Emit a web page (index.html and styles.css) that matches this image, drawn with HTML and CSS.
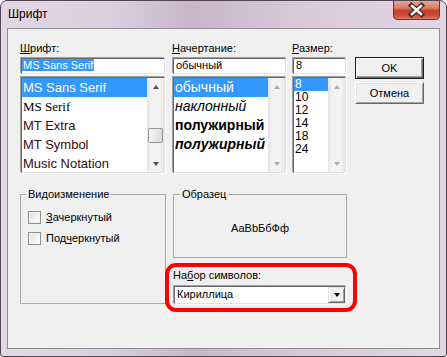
FILE: index.html
```html
<!DOCTYPE html>
<html lang="ru">
<head>
  <meta charset="UTF-8">
  <title>Шрифт</title>
  <link rel="stylesheet" href="styles.css">
</head>
<body>
<div class="window">
  <div class="titlebar">
    <span class="title">Шрифт</span>
    <div class="close">
      <svg width="45" height="18" viewBox="0 0 45 18">
        <path d="M17.5 4.5 L27.5 13.5 M27.5 4.5 L17.5 13.5" stroke="#3b2b2b" stroke-width="5" stroke-linecap="square"/>
        <path d="M18 5 L27 13 M27 5 L18 13" stroke="#fff" stroke-width="2.6" stroke-linecap="square"/>
      </svg>
    </div>
  </div>

  <div class="client">
    <div class="top-row">
      <div class="col col-font">
        <div class="label"><u>Ш</u>рифт:</div>
        <div class="field sunken"><span class="sel">MS Sans Serif</span></div>
        <div class="listbox sunken">
          <ul class="items font-items">
            <li class="selected">MS Sans Serif</li>
            <li class="serif">MS Serif</li>
            <li class="tt">MT Extra</li>
            <li class="tt">MT Symbol</li>
            <li class="tt">Music Notation</li>
          </ul>
          <div class="scrollbar">
            <div class="sb-btn"><span class="arrow up"></span></div>
            <div class="sb-track"><div class="thumb"></div></div>
            <div class="sb-btn"><span class="arrow down"></span></div>
          </div>
        </div>
      </div>

      <div class="col col-style">
        <div class="label"><u>Н</u>ачертание:</div>
        <div class="field sunken">обычный</div>
        <div class="listbox sunken">
          <ul class="items style-items">
            <li class="selected">обычный</li>
            <li class="italic">наклонный</li>
            <li class="bold">полужирный</li>
            <li class="bold italic">полужирный</li>
          </ul>
          <div class="scrollbar">
            <div class="sb-btn"><span class="arrow up off"></span></div>
            <div class="sb-track"></div>
            <div class="sb-btn"><span class="arrow down off"></span></div>
          </div>
        </div>
      </div>

      <div class="col col-size">
        <div class="label"><u>Р</u>азмер:</div>
        <div class="field sunken">8</div>
        <div class="listbox sunken">
          <ul class="items size-items">
            <li class="selected">8</li>
            <li>10</li>
            <li>12</li>
            <li>14</li>
            <li>18</li>
            <li>24</li>
          </ul>
          <div class="scrollbar">
            <div class="sb-btn"><span class="arrow up off"></span></div>
            <div class="sb-track"></div>
            <div class="sb-btn"><span class="arrow down off"></span></div>
          </div>
        </div>
      </div>

      <div class="buttons">
        <div class="btn default">OK</div>
        <div class="btn">Отмена</div>
      </div>
    </div>

    <div class="bottom-row">
      <fieldset class="group effects">
        <legend>Видоизменение</legend>
        <div class="check"><span class="box"></span><u>З</u>ачеркнутый</div>
        <div class="check"><span class="box"></span>Под<u>ч</u>еркнутый</div>
      </fieldset>

      <div class="col-right">
        <fieldset class="group sample">
          <legend>Образец</legend>
          <div class="sample-text">АаBbБбФф</div>
        </fieldset>
        <div class="label charset-label">На<u>б</u>ор символов:</div>
        <div class="combo sunken">
          <span>Кириллица</span>
          <span class="drop"><span class="arrow down dark"></span></span>
        </div>
      </div>
    </div>
  </div>

  <div class="ring"></div>
</div>
</body>
</html>
```

FILE: styles.css
```css
body {
  margin: 0;
  font-family: "Liberation Sans", Arial, sans-serif;
  font-size: 11px;
  color: #000;
}
.window {
  position: relative;
  width: 447px;
  height: 357px;
  box-sizing: border-box;
  border: 1px solid #4f4553;
  border-radius: 7px 7px 3px 3px;
  padding: 0 6px 7px;
  display: flex;
  flex-direction: column;
  overflow: hidden;
  background: linear-gradient(90deg, #e3d7e5 0%, #dccee0 25%, #c8b5ca 43%, #d2c0d4 56%, #dccbdd 72%, #e2d6e5 100%);
}
.titlebar {
  height: 27px;
  display: flex;
  justify-content: space-between;
  align-items: flex-start;
}
.title {
  font-size: 12px;
  line-height: 14px;
  padding: 6px 0 0 1px;
}
.close {
  width: 45px;
  height: 18px;
  margin-top: -1px;
  border: 1px solid #6d3634;
  border-radius: 0 0 4px 4px;
  background: linear-gradient(#e8a796 0%, #d97a66 40%, #c4402c 52%, #c94c36 80%, #de7a5c 100%);
}
.close svg {
  display: block;
}
.client {
  flex: 1;
  background: #f0f0f0;
  border: 1px solid #8d8d8d;
  padding: 13px 0 0 12px;
}

/* sunken 3D edge */
.sunken {
  border: 1px solid;
  border-color: #696969 #e3e3e3 #e3e3e3 #696969;
  box-shadow: -1px -1px 0 #a0a0a0, 1px 1px 0 #fff;
  background: #fff;
  box-sizing: border-box;
}

.top-row {
  display: flex;
  align-items: flex-start;
}
.col {
  display: flex;
  flex-direction: column;
}
.col-font { width: 146px; margin-right: 6px; }
.col-style { width: 115px; margin-right: 5px; }
.col-size { width: 55px; margin-right: 8px; }

.label {
  height: 13px;
  line-height: 13px;
  white-space: nowrap;
}
.field {
  margin: 3px 1px 0;
  height: 16px;
  line-height: 13px;
  padding: 0 0 1px 2px;
  white-space: nowrap;
  overflow: hidden;
}
.col-font .field {
  padding-left: 0;
}
.sel {
  background: #3399ff;
  color: #fff;
  padding: 0 1px;
}
.listbox {
  margin: 3px 1px 0;
  height: 96px;
  display: flex;
}
.items {
  flex: 1;
  list-style: none;
  margin: 0;
  padding: 0;
  overflow: hidden;
}
.items li {
  white-space: nowrap;
  padding-left: 1px;
}
.items .selected {
  background: #3399ff;
  color: #fff;
}
.font-items li {
  height: 19px;
  line-height: 19px;
  font-size: 13px;
}
.font-items .serif {
  font-family: "Liberation Serif", "Times New Roman", serif;
}
.font-items .tt {
  color: #3a0b0b;
}
.style-items li {
  height: 19px;
  line-height: 19px;
  font-size: 14px;
}
.style-items .italic {
  font-style: italic;
}
.style-items .bold {
  font-weight: bold;
}
.size-items li {
  height: 13px;
  line-height: 13px;
  font-size: 12px;
}

.scrollbar {
  width: 17px;
  display: flex;
  flex-direction: column;
  background: linear-gradient(90deg, #e4e4e4, #f3f3f3 25%, #f3f3f3 75%, #e6e6e6);
}
.sb-btn {
  height: 17px;
  display: flex;
  align-items: center;
  justify-content: center;
}
.sb-track {
  flex: 1;
}
.thumb {
  margin: 33px 1px 0;
  height: 15px;
  box-sizing: border-box;
  border: 1px solid #979797;
  border-radius: 2px;
  background: linear-gradient(90deg, #f6f6f6, #e9e9e9 50%, #d8d8d8);
}
.arrow {
  width: 0;
  height: 0;
  border-left: 3.5px solid transparent;
  border-right: 3.5px solid transparent;
}
.arrow.up {
  border-bottom: 4px solid #505050;
}
.arrow.down {
  border-top: 4px solid #505050;
}
.arrow.up.off {
  border-bottom-color: #acacac;
}
.arrow.down.off {
  border-top-color: #acacac;
}
.arrow.dark {
  border-top-color: #000;
}

.buttons {
  width: 69px;
  margin-top: 15px;
  display: flex;
  flex-direction: column;
}
.btn {
  height: 22px;
  box-sizing: border-box;
  line-height: 20px;
  text-align: center;
  border: 1px solid;
  border-color: #fff #696969 #696969 #fff;
  box-shadow: inset 1px 1px 0 #e3e3e3, inset -1px -1px 0 #a0a0a0;
  background: #f0f0f0;
}
.btn + .btn {
  margin-top: 3px;
}
.btn.default {
  border-color: #1c1c1c;
  box-shadow: inset 1px 1px 0 #fff, inset -1px -1px 0 #696969, inset -2px -2px 0 #a0a0a0;
}

.bottom-row {
  display: flex;
  align-items: flex-start;
  margin-top: 15px;
}
.group {
  margin: 0;
  padding: 10px 7px 0;
  border: 1px solid #a9a9a9;
  box-sizing: border-box;
  min-width: 0;
}
.group legend {
  padding: 0 2px;
  margin-left: -2px;
  line-height: 13px;
}
.effects {
  width: 146px;
  height: 116px;
}
.check {
  display: flex;
  align-items: flex-start;
  height: 13px;
  line-height: 13px;
  margin-bottom: 8px;
}
.box {
  width: 13px;
  height: 13px;
  box-sizing: border-box;
  margin-right: 5px;
  border: 1px solid #8e8f8f;
  background: linear-gradient(135deg, #dcdcdc, #f7f7f7 70%, #fff);
  box-shadow: inset 0 0 0 1px #f4f4f4;
}
.col-right {
  width: 174px;
  margin-left: 7px;
  display: flex;
  flex-direction: column;
}
.sample {
  height: 70px;
}
.sample legend {
  margin-left: -1px;
}
.sample-text {
  text-align: center;
  line-height: 13px;
  margin-top: 11px;
}
.charset-label {
  margin-top: 11px;
}
.combo {
  margin: 4px 1px 0;
  height: 18px;
  display: flex;
  justify-content: space-between;
  line-height: 13px;
  padding: 1px 0 0 2px;
}
.drop {
  width: 17px;
  height: 16px;
  margin-top: -1px;
  box-sizing: border-box;
  border: 1px solid;
  border-color: #e3e3e3 #696969 #696969 #e3e3e3;
  box-shadow: inset 1px 1px 0 #fff, inset -1px -1px 0 #a0a0a0;
  background: #f0f0f0;
  display: flex;
  align-items: center;
  justify-content: center;
}

/* annotation ring over the charset box */
.ring {
  position: absolute;
  left: 164px;
  top: 262px;
  width: 192px;
  height: 49px;
  box-sizing: border-box;
  border: 4px solid #ff0000;
  border-radius: 11px;
}
```
